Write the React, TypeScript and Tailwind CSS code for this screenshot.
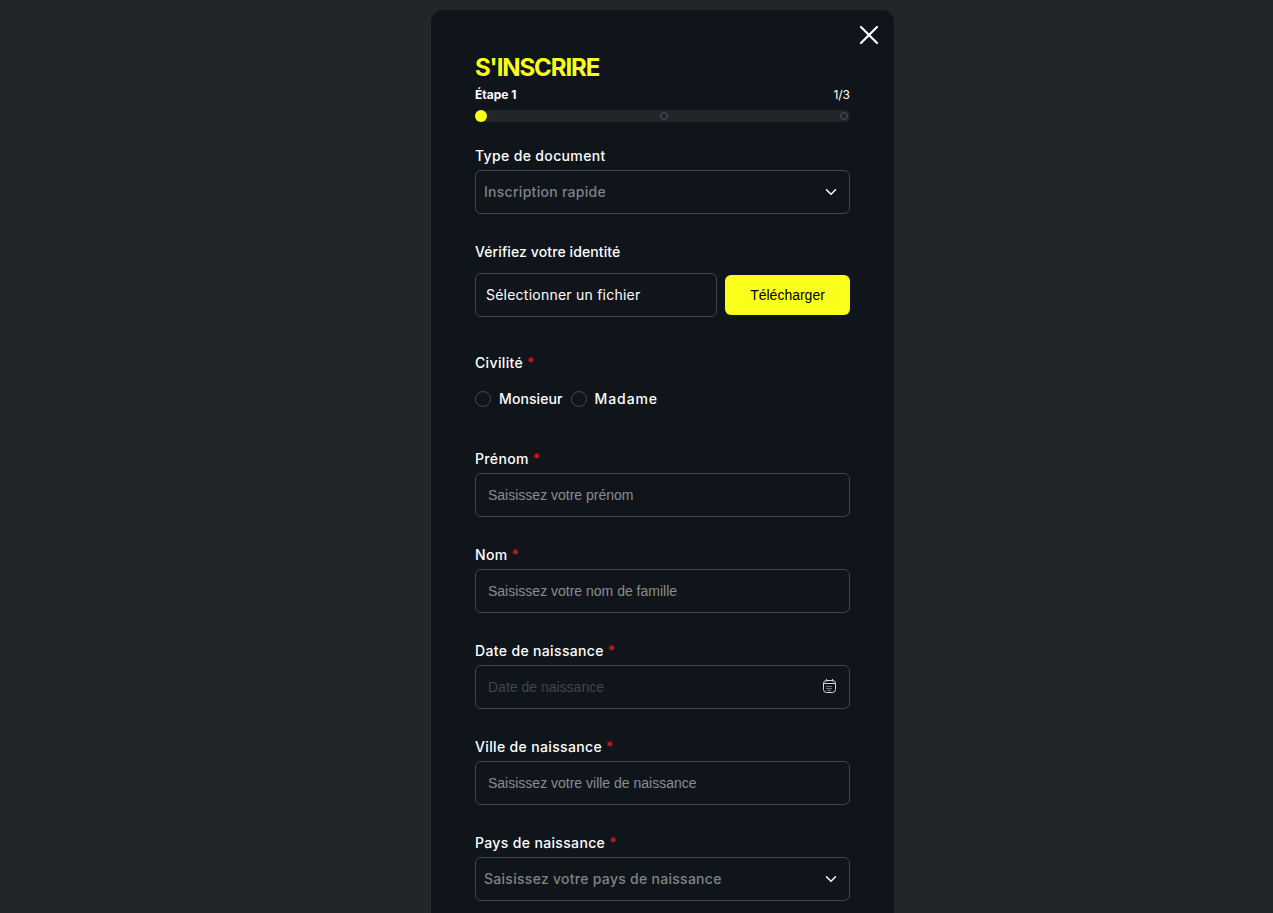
import { ChevronDown, X } from "lucide-react"

const poppins = "font-['Inter','Liberation_Sans',sans-serif]"

const Label = ({ text, required, tight }: { text: string; required?: boolean; tight?: boolean }) => (
  <label className={`block h-5 text-sm leading-5 font-medium text-white ${tight ? "tracking-[0.1px]" : "tracking-[0.35px]"} ${poppins}`}>
    {text}
    {required && <span className="ml-1 text-[#e0141c]">*</span>}
  </label>
)

const Select = ({ placeholder }: { placeholder: string }) => (
  <div className="mt-1 flex h-11 items-center justify-between rounded-md border border-[#41464c] pl-2 pr-[9px]">
    <span className={`text-sm font-medium text-[#7f8387] tracking-[0.28px] ${poppins}`}>{placeholder}</span>
    <ChevronDown size={18} strokeWidth={2} className="text-white" />
  </div>
)

const Input = ({ placeholder, dim, icon }: { placeholder: string; dim?: boolean; icon?: boolean }) => (
  <div className="mt-1 flex h-11 items-center justify-between rounded-md border border-[#41464c] pl-3 pr-[13px]">
    <span className={`font-['Liberation_Sans',sans-serif] text-sm ${dim ? "text-[#41464c]" : "text-[#8a8d90]"}`}>
      {placeholder}
    </span>
    {icon && <CalendarIcon />}
  </div>
)

const CalendarIcon = () => (
  <svg className="mb-0.5" width="13" height="14" viewBox="0 0 13 14" fill="none" stroke="#d5d6d8" strokeWidth="1">
    <rect x="0.5" y="1.5" width="12" height="12" rx="3" />
    <path d="M0.5 4.5H12.5M3.5 0V2.5M9.5 0V2.5" />
    <path d="M3.5 7.5H9.5M3.5 9.5H9.5M4.5 11.5H8.5" strokeDasharray="1 1" />
  </svg>
)

const Radio = ({ text, wide }: { text: string; wide?: boolean }) => (
  <div className="flex items-center gap-2">
    <span className="size-4 rounded-full border border-[#41464c]" />
    <span className={`text-sm font-medium text-white ${wide ? "tracking-[0.9px]" : "tracking-[0.1px]"} ${poppins}`}>{text}</span>
  </div>
)

const Field = ({ label, placeholder, dim, icon }: { label: string; placeholder: string; dim?: boolean; icon?: boolean }) => (
  <div className="mt-7">
    <Label text={label} required />
    <Input placeholder={placeholder} dim={dim} icon={icon} />
  </div>
)

const App = () => {
  return (
    <div className="flex h-screen justify-center overflow-hidden bg-[#212629] pl-[52px]">
      <div className="relative mt-[10px] h-[1200px] w-[463px] shrink-0 rounded-t-xl bg-[#10151b] px-11 pt-[42px]">
        <button className="absolute right-[9px] top-[9px] text-white">
          <X size={32} strokeWidth={1.6} />
        </button>

        <h1 className={`text-2xl leading-8 font-bold text-[#f9ff1a] tracking-[-1.1px] ${poppins}`}>S'INSCRIRE</h1>
        <div className={`mt-[3px] flex h-4 items-center justify-between text-xs leading-4 text-white ${poppins}`}>
          <span className="font-bold">Étape 1</span>
          <span>1/3</span>
        </div>

        <div className="mt-[7px] flex h-3 items-center justify-between rounded-full bg-[#212629] pr-[2px]">
          <span className="size-3 rounded-full bg-[#f9ff1a]" />
          <span className="size-2 rounded-full border border-[#4c5156]" />
          <span className="size-2 rounded-full border border-[#4c5156]" />
        </div>

        <div className="mt-6">
          <Label text="Type de document" />
          <Select placeholder="Inscription rapide" />
        </div>

        <div className="mt-7">
          <Label text="Vérifiez votre identité" tight />
          <div className="mt-[11px] flex items-center gap-2">
            <div className={`flex h-11 w-[242px] items-center rounded-md border border-[#41464c] pl-[10px] text-sm text-white tracking-[0.23px] ${poppins}`}>
              Sélectionner un fichier
            </div>
            <button className="h-10 w-[125px] rounded-md bg-[#f9ff1a] font-['Liberation_Sans',sans-serif] text-sm text-black">
              Télécharger
            </button>
          </div>
        </div>

        <div className="mt-9">
          <Label text="Civilité" required />
          <div className="mt-4 flex h-5 items-center gap-2">
            <Radio text="Monsieur" />
            <Radio text="Madame" wide />
          </div>
        </div>

        <div className="mt-10">
          <Label text="Prénom" required />
          <Input placeholder="Saisissez votre prénom" />
        </div>
        <Field label="Nom" placeholder="Saisissez votre nom de famille" />
        <Field label="Date de naissance" placeholder="Date de naissance" dim icon />
        <Field label="Ville de naissance" placeholder="Saisissez votre ville de naissance" />

        <div className="mt-7">
          <Label text="Pays de naissance" required />
          <Select placeholder="Saisissez votre pays de naissance" />
        </div>
      </div>
    </div>
  )
}

export default App
